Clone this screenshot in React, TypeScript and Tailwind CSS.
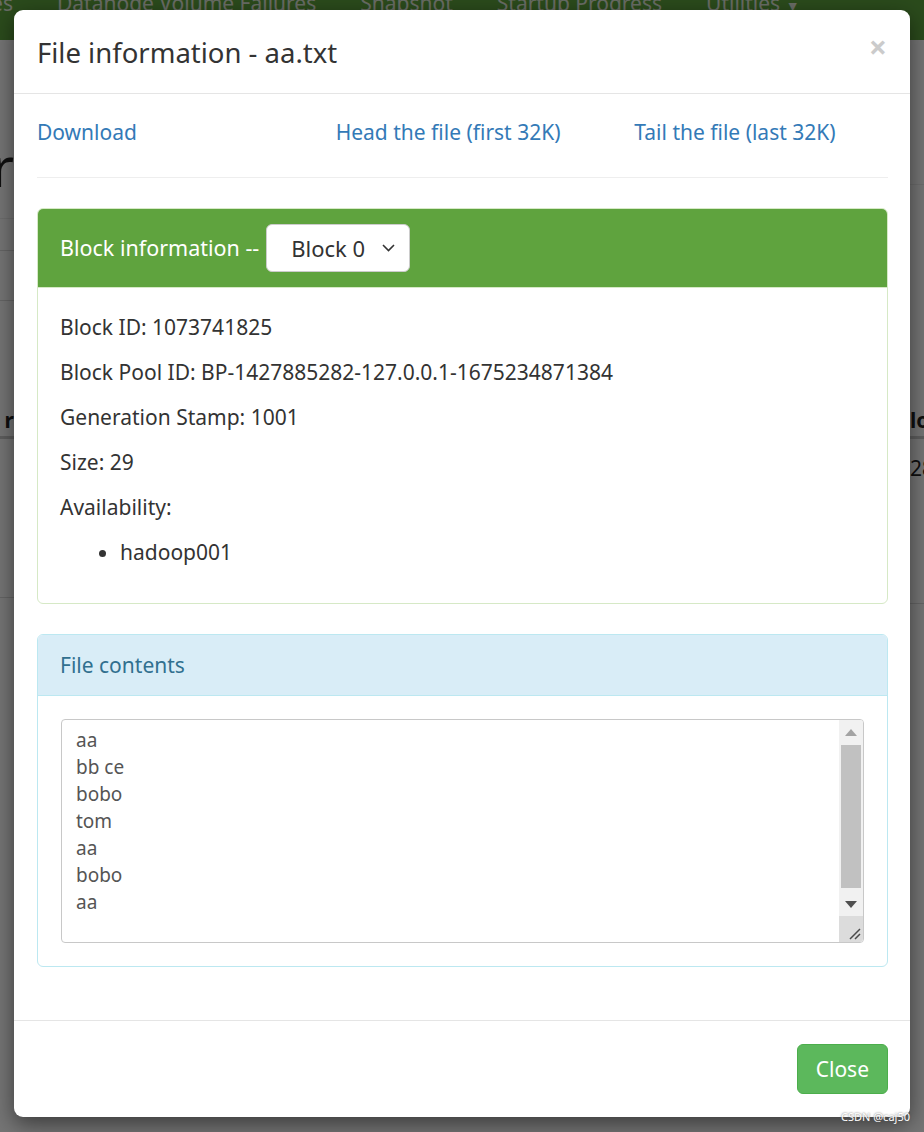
import React from 'react';

const navItems = ['Datanodes', 'Datanode Volume Failures', 'Snapshot', 'Startup Progress'];

const blockInfo = [
  'Block ID: 1073741825',
  'Block Pool ID: BP-1427885282-127.0.0.1-1675234871384',
  'Generation Stamp: 1001',
  'Size: 29',
  'Availability:',
];

const fileLines = ['aa', 'bb ce', 'bobo', 'tom', 'aa', 'bobo', 'aa'];

function FakeScrollbar() {
  return (
    <div className="flex w-[24px] flex-col bg-[#f1f1f1]">
      {/* up button */}
      <div className="flex h-[24px] items-center justify-center">
        <svg width="12" height="7" viewBox="0 0 12 7">
          <path d="M0 7 L6 0 L12 7 Z" fill="#a3a3a3" />
        </svg>
      </div>
      <div className="mx-[2px] mt-[1px] h-[143px] bg-[#c1c1c1]" />
      <div className="mt-[4px] flex h-[24px] items-center justify-center">
        <svg width="12" height="7" viewBox="0 0 12 7">
          <path d="M0 0 L12 0 L6 7 Z" fill="#505050" />
        </svg>
      </div>
      {/* resize corner */}
      <div className="flex h-[26px] items-end justify-end bg-[#dcdcdc] pb-[2px] pr-[2px]">
        <svg width="14" height="14" viewBox="0 0 14 14">
          <path d="M13 3 L3 13 M13 8 L8 13" stroke="#4a4a4a" strokeWidth="1.5" />
        </svg>
      </div>
    </div>
  );
}

export default function App() {
  return (
    <div className="relative h-[1132px] w-full overflow-hidden bg-white font-['Noto_Sans','Liberation_Sans',sans-serif]">
      {/* page behind the modal */}
      <nav className="flex h-[40px] items-start overflow-hidden bg-[#5fa33e] text-[21px] text-[#e4ecdf]">
        <div className="-ml-[94px] -mt-[12px] flex gap-[44px] leading-[30px]">
          {navItems.map((n) => (
            <span key={n} className="whitespace-nowrap">{n}</span>
          ))}
          <span className="whitespace-nowrap">
            Utilities <span className="text-[14px]">▼</span>
          </span>
        </div>
      </nav>
      <div className="flex justify-between">
        <div className="w-[14px] overflow-hidden">
          <div className="mt-[96px] flex h-[60px] justify-end text-[54px] leading-[60px] text-[#222]">r</div>
          <div className="mt-[22px] border-t border-[#eee]" />
          <div className="mt-[31px] border-t border-[#ddd]" />
          <div className="mt-[49px] border-t border-[#ddd]" />
          <div className="mt-[104px] flex justify-end text-[21px] font-bold leading-[30px] text-[#222]">r</div>
          <div className="mt-[1px] border-t-[3px] border-[#ccc]" />
          <div className="mt-[158px] border-t border-[#ddd]" />
        </div>
        <div className="w-[14px] overflow-hidden">
          <div className="mt-[144px] border-t border-[#eee]" />
          <div className="mt-[220px] whitespace-nowrap text-[21px] font-bold leading-[30px] text-[#222]">lo</div>
          <div className="mt-[1px] border-t-[3px] border-[#ccc]" />
          <div className="mt-[14px] whitespace-nowrap text-[21px] leading-[30px] text-[#222]">28</div>
          <div className="mt-[120px] border-t border-[#ddd]" />
        </div>
      </div>

      {/* backdrop */}
      <div className="absolute inset-0 bg-black/[0.54]" />

      {/* modal */}
      <div className="absolute left-[14px] top-[10px] w-[896px] rounded-[9px] bg-white shadow-[0_7px_22px_rgba(0,0,0,0.5)]">
        <div className="flex items-start justify-between border-b border-[#e5e5e5] pb-[20px] pl-[23px] pr-[23px] pt-[23px]">
          <h4 className="text-[27.5px] leading-[40px] text-[#333]">File information - aa.txt</h4>
          <button className="-mt-[6px] text-[32px] font-bold leading-[40px] text-black opacity-20">×</button>
        </div>

        <div className="pb-[23px] pl-[23px] pr-[22px] pt-[23px]">
          <div className="-ml-[23px] -mr-[22px] grid grid-cols-3 text-[21px] leading-[30px] text-[#337ab7]">
            <div className="px-[23px]">Download</div>
            <div className="px-[23px]">Head the file (first 32K)</div>
            <div className="px-[23px]">Tail the file (last 32K)</div>
          </div>
          <hr className="my-[30px] border-t border-[#eee]" />

          {/* block info panel */}
          <div className="mb-[30px] rounded-[6px] border border-[#d6e9c6]">
            <div className="flex items-center rounded-t-[5px] border-b border-[#d6e9c6] bg-[#5fa33e] px-[22px] py-[15px] text-[21.5px] leading-[30px] text-white">
              <span>Block information --</span>
              <div className="ml-[7px] flex h-[48px] w-[144px] items-center justify-between rounded-[6px] border border-[#ccc] bg-white pl-[24px] pr-[14px] text-[22px] text-[#333]">
                <span>Block 0</span>
                <svg width="13" height="8" viewBox="0 0 13 8" fill="none">
                  <path d="M1 1 L6.5 6.5 L12 1" stroke="#333" strokeWidth="1.6" />
                </svg>
              </div>
            </div>
            <div className="px-[22px] pb-[21px] pt-[24px] text-[21px] leading-[30px] text-[#333]">
              {blockInfo.map((t) => (
                <p key={t} className="mb-[15px] whitespace-nowrap">{t}</p>
              ))}
              <ul className="mb-[15px] list-disc pl-[60px]">
                <li>hadoop001</li>
              </ul>
            </div>
          </div>

          {/* file contents panel */}
          <div className="mb-[30px] rounded-[6px] border border-[#bce8f1]">
            <div className="rounded-t-[5px] border-b border-[#bce8f1] bg-[#d9edf7] px-[22px] py-[15px] text-[21px] leading-[30px] text-[#31708f]">
              File contents
            </div>
            <div className="p-[23px]">
              <div className="flex h-[224px] overflow-hidden rounded-[4px] border border-[#c8c8c8]">
                <div className="flex-1 px-[14px] py-[7px] text-[19px] leading-[27px] text-[#555]">
                  {fileLines.map((l, i) => (
                    <div key={i}>{l}</div>
                  ))}
                </div>
                <FakeScrollbar />
              </div>
            </div>
          </div>
        </div>

        <div className="flex justify-end border-t border-[#e5e5e5] pb-[23px] pl-[23px] pr-[22px] pt-[23px]">
          <button className="rounded-[6px] border border-[#4cae4c] bg-[#5cb85c] px-[18px] py-[9px] text-[21px] leading-[30px] text-white">
            Close
          </button>
        </div>
      </div>

      <div className="absolute right-[14px] top-[1110px] text-[11px] leading-[14px] text-white [text-shadow:0_0_2px_#555]">
        CSDN @caj50
      </div>
    </div>
  );
}
